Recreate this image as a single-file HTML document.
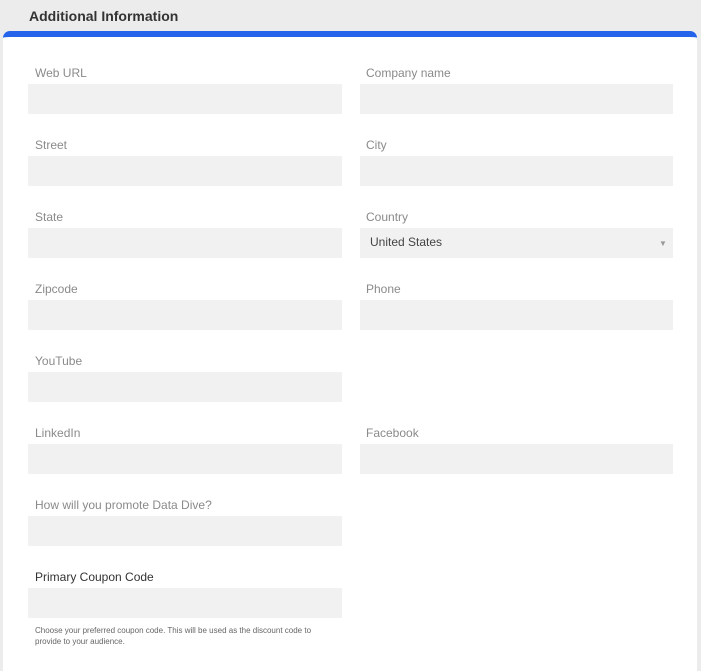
<!DOCTYPE html>
<html><head><style>
body{margin:0;background:#ececec;font-family:"Liberation Sans",sans-serif;width:701px;height:660px;overflow:hidden;position:relative}
h2{position:absolute;left:29px;top:8px;margin:0;font-size:14px;font-weight:bold;color:#333}
.card{position:absolute;left:3px;top:31px;width:694px;height:640px;background:#fff;border-top:6px solid #2563eb;border-radius:7px 7px 0 0;box-sizing:border-box}
.l{position:absolute;font-size:12px;color:#8a8a8a}
.i{position:absolute;height:30px;background:#f1f1f1;width:314px}
.c{position:absolute;left:370px;top:235px;font-size:12px;color:#444}
.a{position:absolute;left:659px;top:239px;font-size:8px;color:#999}
.h{position:absolute;left:35px;top:625px;font-size:8px;color:#666;line-height:11px;width:300px}
</style></head><body>
<h2>Additional Information</h2>
<div class="card"></div>
<div class="l" style="left:35px;top:66px">Web URL</div><div class="i" style="left:28px;top:84px"></div>
<div class="l" style="left:366px;top:66px">Company name</div><div class="i" style="left:360px;top:84px;width:313px"></div>
<div class="l" style="left:35px;top:138px">Street</div><div class="i" style="left:28px;top:156px"></div>
<div class="l" style="left:366px;top:138px">City</div><div class="i" style="left:360px;top:156px;width:313px"></div>
<div class="l" style="left:35px;top:210px">State</div><div class="i" style="left:28px;top:228px"></div>
<div class="l" style="left:366px;top:210px">Country</div><div class="i" style="left:360px;top:228px;width:313px"></div>
<div class="c">United States</div><div class="a">▼</div>
<div class="l" style="left:35px;top:282px">Zipcode</div><div class="i" style="left:28px;top:300px"></div>
<div class="l" style="left:366px;top:282px">Phone</div><div class="i" style="left:360px;top:300px;width:313px"></div>
<div class="l" style="left:35px;top:354px">YouTube</div><div class="i" style="left:28px;top:372px"></div>
<div class="l" style="left:35px;top:426px">LinkedIn</div><div class="i" style="left:28px;top:444px"></div>
<div class="l" style="left:366px;top:426px">Facebook</div><div class="i" style="left:360px;top:444px;width:313px"></div>
<div class="l" style="left:35px;top:498px">How will you promote Data Dive?</div><div class="i" style="left:28px;top:516px"></div>
<div class="l" style="left:35px;top:570px;color:#333">Primary Coupon Code</div><div class="i" style="left:28px;top:588px"></div>
<div class="h">Choose your preferred coupon code. This will be used as the discount code to provide to your audience.</div>
</body></html>
